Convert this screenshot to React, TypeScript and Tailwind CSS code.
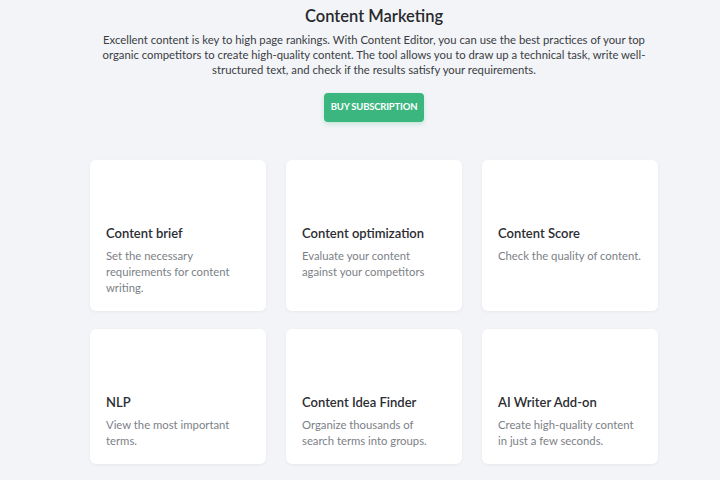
import React from "react";

type Feature = { title: string; text: string };

const features: Feature[] = [
  { title: "Content brief", text: "Set the necessary requirements for content writing." },
  { title: "Content optimization", text: "Evaluate your content against your competitors" },
  { title: "Content Score", text: "Check the quality of content." },
  { title: "NLP", text: "View the most important terms." },
  { title: "Content Idea Finder", text: "Organize thousands of search terms into groups." },
  { title: "AI Writer Add-on", text: "Create high-quality content in just a few seconds." },
];

function FeatureCard({ title, text }: Feature) {
  return (
    <div className="flex flex-col rounded-[6px] bg-white px-4 pb-[15px] pt-4 shadow-[0_1px_3px_rgba(30,40,60,0.06)]">
      <div className="h-[48px]" />
      <h3 className="text-[13px] font-semibold leading-[18px] text-[#2b2d33]">{title}</h3>
      <p className="mt-[6px] text-[11.3px] leading-[16px] text-[#7c7f87]">{text}</p>
    </div>
  );
}

export default function App() {
  return (
    <div
      className="min-h-[480px] w-full bg-[#f2f4f7] pl-[28px]"
      style={{ fontFamily: "Lato, 'Noto Sans', sans-serif" }}
    >
      <div className="flex flex-col items-center pt-[4px]">
        <h1 className="text-[16.5px] font-semibold leading-[24px] text-[#27292e]">Content Marketing</h1>
        <p className="mt-[4px] w-[554px] text-center text-[11.3px] leading-[15px] text-[#3a3d44]">
          Excellent content is key to high page rankings. With Content Editor, you can use the best practices of your
          top organic competitors to create high-quality content. The tool allows you to draw up a technical task, write
          well-structured text, and check if the results satisfy your requirements.
        </p>
        <button className="mt-[16px] h-[29px] w-[100px] rounded-[4px] bg-[#3ab67e] text-[9.5px] font-bold tracking-[-0.2px] text-white shadow-[0_2px_4px_rgba(58,182,126,0.25)]">
          BUY SUBSCRIPTION
        </button>
        <div className="mt-[38px] grid w-[568px] grid-cols-3 gap-x-[20px] gap-y-[18px]">
          {features.map((f) => (
            <FeatureCard key={f.title} {...f} />
          ))}
        </div>
      </div>
    </div>
  );
}
